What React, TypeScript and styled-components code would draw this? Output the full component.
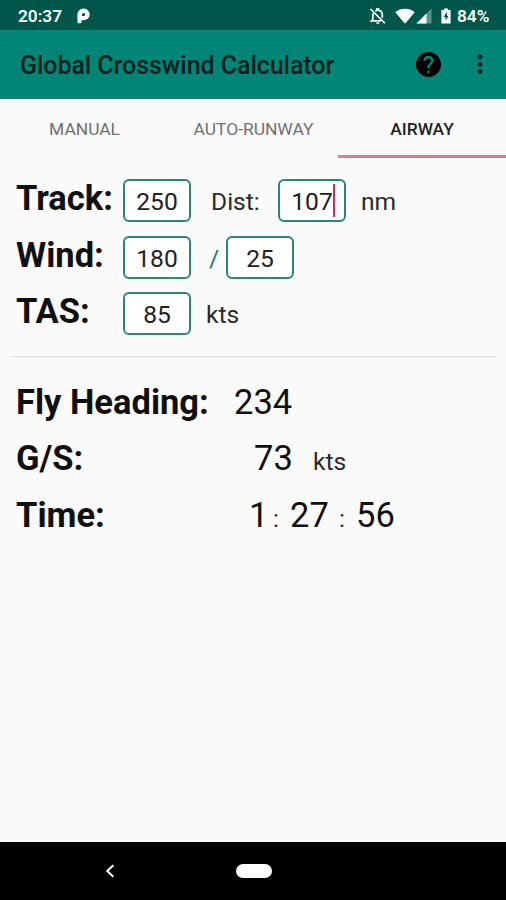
import React from "react";
import styled, { createGlobalStyle } from "styled-components";

const GlobalStyle = createGlobalStyle`
  * { box-sizing: border-box; }
  body { margin: 0; background: #fafafa; }
`;

const Screen = styled.div`
  width: 506px;
  height: 900px;
  display: flex;
  flex-direction: column;
  overflow: hidden;
  background: #fafafa;
  color: #101010;
  font-family: Roboto, sans-serif;
`;

const StatusBar = styled.header`
  height: 30px;
  flex: none;
  display: flex;
  align-items: center;
  padding: 2px 16px 0 18px;
  background: #00564a;
  color: #fff;
  font-size: 17.2px;
  font-weight: 600;
  line-height: 28px;
`;

const StatusText = styled.span<{ $width: number }>`
  width: ${(p) => p.$width}px;
  white-space: nowrap;
`;

const StatusIcon = styled.svg<{ $left?: number }>`
  flex: none;
  margin-left: ${(p) => p.$left ?? 0}px;
`;

const Spacer = styled.div`
  flex: 1;
`;

const AppBar = styled.div`
  height: 69px;
  flex: none;
  display: flex;
  align-items: center;
  padding: 0 21px 0 20px;
  background: #008577;
  border-bottom: 1px solid #25796f;
`;

const Title = styled.h1`
  margin: 3px 0 0;
  font-size: 24.9px;
  font-weight: 500;
  line-height: 30px;
  color: #04201c;
  white-space: nowrap;
`;

const BarIcon = styled.svg<{ $right: number }>`
  flex: none;
  margin-right: ${(p) => p.$right}px;
`;

const Tabs = styled.nav`
  height: 59px;
  flex: none;
  display: grid;
  grid-template-columns: 169px 169px 168px;
`;

const Tab = styled.div<{ $active?: boolean }>`
  height: 59px;
  padding-top: 1px;
  text-align: center;
  font-size: 17.4px;
  font-weight: ${(p) => (p.$active ? 500 : 400)};
  line-height: 58px;
  color: ${(p) => (p.$active ? "#222" : "#707070")};
  border-bottom: 3px solid ${(p) => (p.$active ? "#dc7c8e" : "transparent")};
`;

const Form = styled.section`
  height: 199px;
  flex: none;
  display: flex;
  flex-direction: column;
  padding: 20px 0 0 16px;
`;

const Row = styled.div`
  height: 56.7px;
  flex: none;
  display: flex;
  align-items: baseline;
`;

const Label = styled.span<{ $width: number }>`
  width: ${(p) => p.$width}px;
  flex: none;
  font-size: 34.5px;
  font-weight: 700;
  line-height: 40px;
  white-space: nowrap;
`;

const Field = styled.div`
  width: 68px;
  height: 43px;
  flex: none;
  display: flex;
  justify-content: center;
  border: 2px solid #2c8675;
  border-radius: 6px;
  background: #fff;
  font-size: 24.6px;
  line-height: 42px;
  color: #222;
`;

const Caret = styled.span`
  width: 2px;
  height: 33px;
  margin: 3px -2px 0 0;
  background: #d12762;
`;

const Unit = styled.span<{ $width: number; $left?: number; $accent?: boolean }>`
  width: ${(p) => p.$width}px;
  margin-left: ${(p) => p.$left ?? 0}px;
  flex: none;
  font-size: 24.6px;
  color: ${(p) => (p.$accent ? "#16806f" : "#2a2a2a")};
  white-space: nowrap;
`;

const Divider = styled.hr`
  width: 485px;
  height: 1px;
  flex: none;
  margin: -1px 0 0 11px;
  border: 0;
  background: #dadada;
`;

const Results = styled.section`
  flex: 1;
  display: flex;
  flex-direction: column;
  padding: 24.7px 0 0 16px;
`;

const Value = styled.span<{ $width: number }>`
  width: ${(p) => p.$width}px;
  flex: none;
  font-size: 34.5px;
  line-height: 40px;
  white-space: nowrap;
`;

const NavBar = styled.footer`
  height: 58px;
  flex: none;
  display: flex;
  align-items: center;
  padding-left: 105px;
  background: #000;
`;

const HomePill = styled.div`
  width: 36px;
  height: 14px;
  margin-left: 121px;
  border-radius: 7px;
  background: #fff;
`;

export default function App() {
  return (
    <>
      <GlobalStyle />
      <Screen>
        <StatusBar>
          <StatusText $width={59}>20:37</StatusText>
          <StatusIcon width="13" height="16" viewBox="0 0 13 16">
            <path
              fillRule="evenodd"
              fill="#fff"
              d="M6.6.5A6 6 0 0 1 12.7 6.4 5.9 5.9 0 0 1 6.8 12.2H4.6V13.5A2.1 2.1 0 0 1 .4 13.5V6.6A6.1 6.1 0 0 1 6.6.5ZM6.6 4.9A1.6 1.6 0 0 0 5 6.5V8.1H6.7A1.6 1.6 0 0 0 6.6 4.9Z"
            />
          </StatusIcon>
          <Spacer />
          <StatusIcon width="18" height="18" viewBox="0 0 18 18" fill="none" stroke="#fff">
            <path d="M1.5 2 15.8 16.2" strokeWidth="1.7" />
            <path d="M4.4 6.2C3.9 7 3.8 8 3.8 9V12.4L2.5 13.8H12M6.3 3.9 8 3.1V1.8H9.4V3.1C12 3.6 13.3 5.6 13.3 8V10.8" strokeWidth="1.7" />
            <path d="M7 15.4H10.4A1.7 1.7 0 0 1 7 15.4Z" fill="#fff" stroke="none" />
          </StatusIcon>
          <StatusIcon $left={8} width="20" height="16" viewBox="0 0 20 16">
            <path d="M.3 4.3C5.9-.3 14.1-.3 19.7 4.3L10 15.8Z" fill="#fff" />
          </StatusIcon>
          <StatusIcon $left={1} width="16" height="16" viewBox="0 0 16 16">
            <path d="M15.5.5V15.5H.5Z" fill="#5b958c" />
            <path d="M10.5 5.5V15.5H.5Z" fill="#fff" />
          </StatusIcon>
          <StatusIcon $left={9} width="10" height="16" viewBox="0 0 10 16">
            <path d="M3 .5H7V2.1H9.6V15.5H.4V2.1H3Z" fill="#fff" />
            <path d="M5.8 3.6 2.6 9H4.6V13L7.5 7.8H5.8Z" fill="#00564a" />
          </StatusIcon>
          <StatusIcon $left={5} width="1" height="1" />
          <StatusText $width={33}>84%</StatusText>
        </StatusBar>

        <AppBar>
          <Title>Global Crosswind Calculator</Title>
          <Spacer />
          <BarIcon $right={36} width="25" height="25" viewBox="2 2 20 20">
            <path
              fill="#000"
              d="M12 2C6.48 2 2 6.48 2 12s4.48 10 10 10 10-4.48 10-10S17.52 2 12 2zm1 17h-2v-2h2v2zm2.07-7.75l-.9.92C13.45 12.9 13 13.5 13 15h-2v-.5c0-1.1.45-2.1 1.17-2.83l1.24-1.26c.37-.36.59-.86.59-1.41 0-1.1-.9-2-2-2s-2 .9-2 2H8c0-2.21 1.79-4 4-4s4 1.79 4 4c0 .88-.36 1.68-.93 2.25z"
            />
          </BarIcon>
          <BarIcon $right={2} width="6" height="20" viewBox="0 0 6 20" fill="#04201c">
            <circle cx="3" cy="3" r="2.4" />
            <circle cx="3" cy="10.5" r="2.4" />
            <circle cx="3" cy="17.6" r="2.4" />
          </BarIcon>
        </AppBar>

        <Tabs>
          <Tab>MANUAL</Tab>
          <Tab>AUTO-RUNWAY</Tab>
          <Tab $active>AIRWAY</Tab>
        </Tabs>

        <Form>
          <Row>
            <Label $width={107}>Track:</Label>
            <Field>250</Field>
            <Unit $left={20} $width={67}>Dist:</Unit>
            <Field>
              107
              <Caret />
            </Field>
            <Unit $left={15} $width={40}>nm</Unit>
          </Row>
          <Row>
            <Label $width={107}>Wind:</Label>
            <Field>180</Field>
            <Unit $left={18} $width={17} $accent>/</Unit>
            <Field>25</Field>
          </Row>
          <Row>
            <Label $width={107}>TAS:</Label>
            <Field>85</Field>
            <Unit $left={15} $width={40}>kts</Unit>
          </Row>
        </Form>

        <Divider />

        <Results>
          <Row>
            <Label $width={218}>Fly Heading:</Label>
            <Value $width={60}>234</Value>
          </Row>
          <Row>
            <Label $width={238}>G/S:</Label>
            <Value $width={59}>73</Value>
            <Unit $width={40}>kts</Unit>
          </Row>
          <Row>
            <Label $width={233}>Time:</Label>
            <Value $width={24}>1</Value>
            <Unit $width={17}>:</Unit>
            <Value $width={49}>27</Value>
            <Unit $width={17}>:</Unit>
            <Value $width={42}>56</Value>
          </Row>
        </Results>

        <NavBar>
          <svg width="10" height="14" viewBox="0 0 10 14" fill="none" stroke="#fff" strokeWidth="2">
            <path d="M8.3 1.2 2.2 7 8.3 12.8" />
          </svg>
          <HomePill />
        </NavBar>
      </Screen>
    </>
  );
}
